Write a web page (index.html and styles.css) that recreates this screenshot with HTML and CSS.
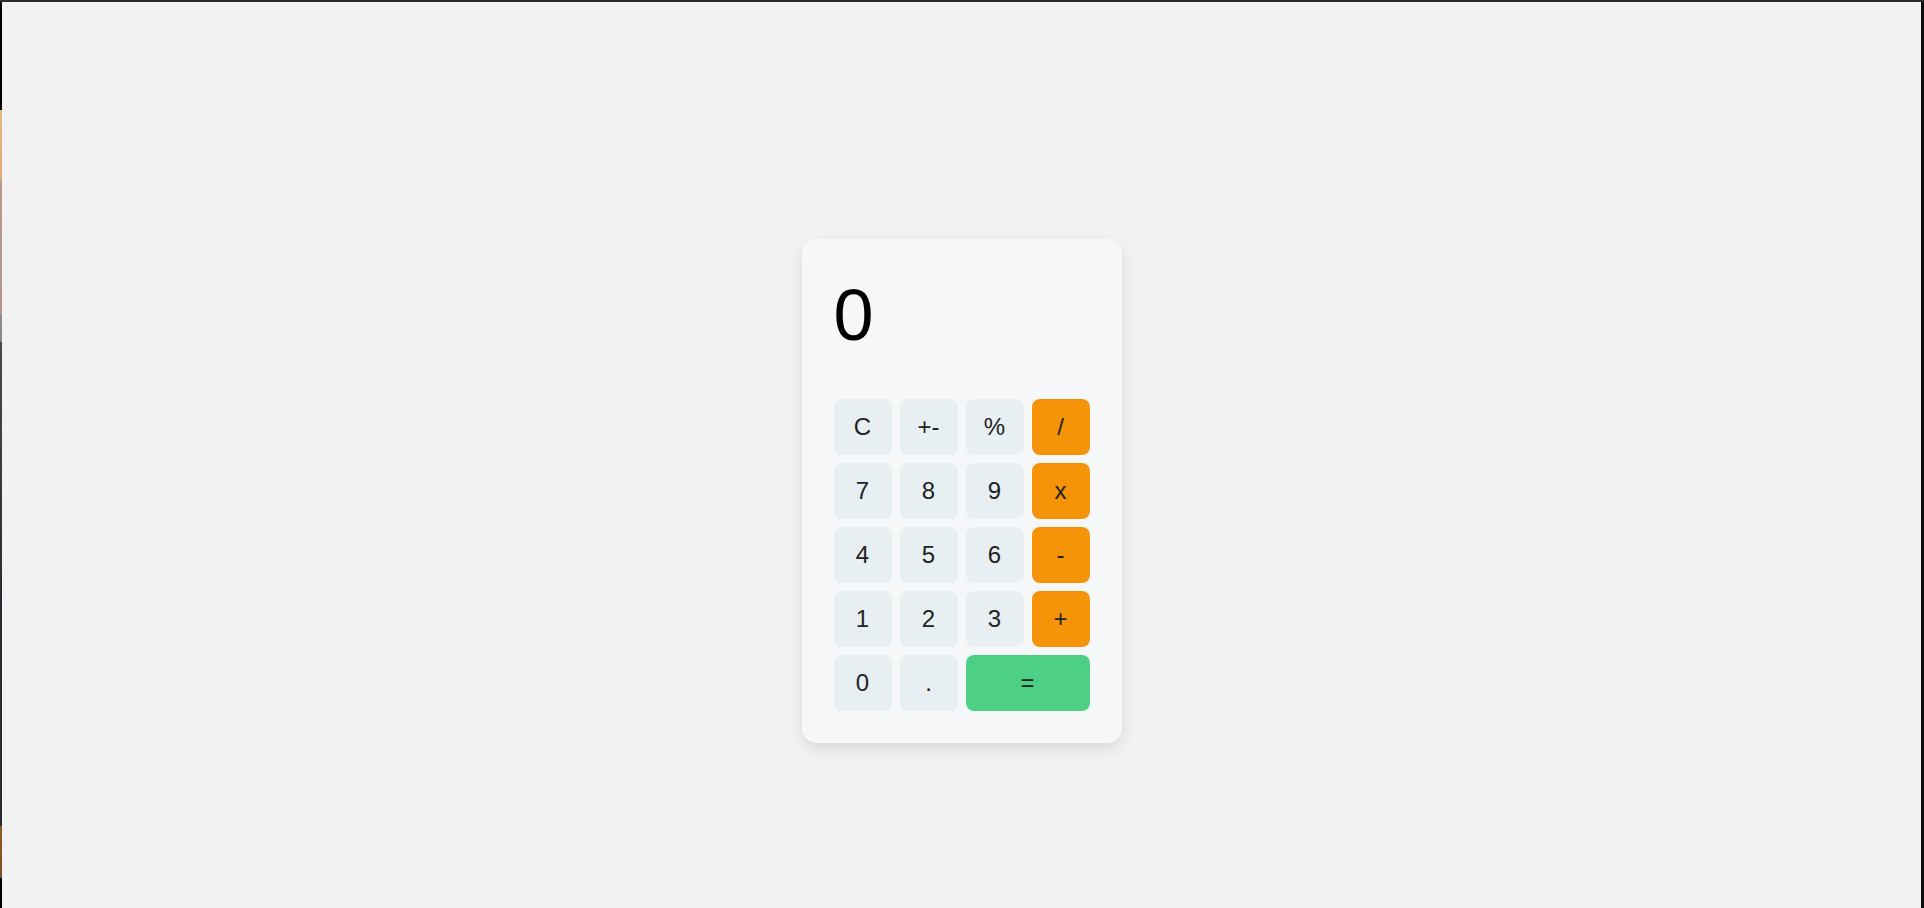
FILE: index.html
```html
<!DOCTYPE html>
<html lang="en">
<head>
<meta charset="utf-8">
<title>Calculator</title>
<link rel="stylesheet" href="styles.css">
</head>
<body>
<div class="edge-left"></div>
<main class="page">
  <div class="calculator">
    <div class="display">0</div>
    <div class="keys">
      <button class="key">C</button>
      <button class="key">+-</button>
      <button class="key">%</button>
      <button class="key op">/</button>
      <button class="key">7</button>
      <button class="key">8</button>
      <button class="key">9</button>
      <button class="key op">x</button>
      <button class="key">4</button>
      <button class="key">5</button>
      <button class="key">6</button>
      <button class="key op">-</button>
      <button class="key">1</button>
      <button class="key">2</button>
      <button class="key">3</button>
      <button class="key op">+</button>
      <button class="key">0</button>
      <button class="key">.</button>
      <button class="key equals">=</button>
    </div>
  </div>
</main>
<div class="edge-right"></div>
</body>
</html>
```
FILE: styles.css
```css
html, body {
  margin: 0;
  padding: 0;
  height: 100%;
}
body {
  display: flex;
  box-sizing: border-box;
  border-top: 2px solid #2d2d2d;
  background: #f2f2f2;
  font-family: "Liberation Sans", Arial, sans-serif;
  overflow: hidden;
}
.edge-left {
  width: 2px;
  flex: none;
  background: linear-gradient(to bottom,
    #000 0, #000 108px,
    #e4b988 108px, #dcaa78 178px,
    #b99a8b 178px, #b39588 312px,
    #8f8b88 312px, #8a8684 340px,
    #4a4a4e 340px, #2a2a32 600px, #2b2b2f 824px,
    #8d5a2a 824px, #7a4e26 876px,
    #000 876px);
}
.edge-right {
  width: 3px;
  flex: none;
  background: #0d0d0d;
}
.page {
  flex: 1;
  display: flex;
  justify-content: center;
  align-items: flex-start;
  padding-top: 237px;
}
.calculator {
  width: 320px;
  box-sizing: border-box;
  padding: 32px;
  background: #f5f7f9;
  border-radius: 15px;
  box-shadow: 0 6px 16px rgba(0, 0, 0, 0.10);
}
.display {
  height: 128px;
  box-sizing: border-box;
  padding-top: 3px;
  font-size: 72px;
  line-height: normal;
  color: #000;
}
.keys {
  display: grid;
  grid-template-columns: repeat(4, 58px);
  grid-auto-rows: 56px;
  gap: 8px;
}
.key {
  border: none;
  margin: 0;
  padding: 0;
  border-radius: 8px;
  background: #e8eff3;
  color: #222;
  font-family: "Liberation Sans", Arial, sans-serif;
  font-size: 24px;
  cursor: pointer;
}
.key.op {
  background: #f59309;
}
.key.equals {
  grid-column: span 2;
  background: #4dd086;
}
```
